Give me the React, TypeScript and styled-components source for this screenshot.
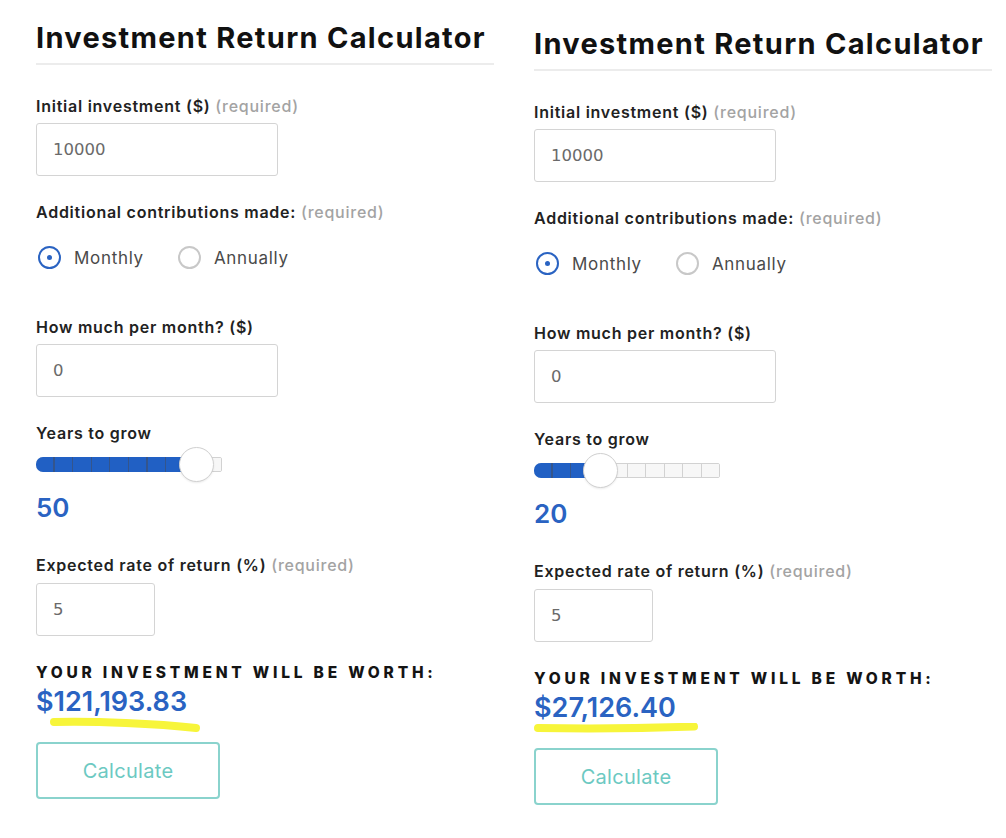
import React from "react";
import styled, { createGlobalStyle } from "styled-components";

const Global = createGlobalStyle`
  html, body { margin: 0; padding: 0; background: #ffffff; }
  body { font-family: Inter, "Open Sans", Lato, sans-serif; color: #1b1b1b; }
  * { box-sizing: border-box; }
`;

const Page = styled.main`
  display: flex;
  gap: 40px;
  padding-left: 36px;
  width: 1006px;
  height: 838px;
  overflow: hidden;
`;

const Panel = styled.section<{ $shift: number }>`
  width: 458px;
  padding-top: ${(p) => p.$shift}px;
  display: flex;
  flex-direction: column;
  align-items: flex-start;
`;

const Title = styled.h1`
  align-self: stretch;
  margin: 0;
  padding-top: 21px;
  padding-bottom: 8px;
  font-size: 29px;
  line-height: 34px;
  font-weight: 700;
  letter-spacing: 1.3px;
  color: #111;
  border-bottom: 2px solid #ececec;
  white-space: nowrap;
`;

const Label = styled.div<{ $top: number }>`
  margin-top: ${(p) => p.$top}px;
  font-size: 16px;
  line-height: 18px;
  font-weight: 600;
  letter-spacing: 0.75px;
  color: #222;
`;

const Req = styled.span`
  font-weight: 500;
  color: #a3a3a3;
`;

const Input = styled.div<{ $w: number; $top: number }>`
  margin-top: ${(p) => p.$top}px;
  width: ${(p) => p.$w}px;
  height: 53px;
  border: 1.5px solid #d4d4d4;
  border-radius: 3px;
  padding-left: 16px;
  display: flex;
  align-items: center;
  font-family: "DejaVu Sans", Inter, sans-serif;
  font-size: 16.5px;
  color: #6a6a6a;
`;

const RadioRow = styled.div`
  margin-top: 25px;
  padding-left: 2px;
  display: flex;
  align-items: center;
  gap: 34px;
`;

const RadioItem = styled.label`
  display: flex;
  align-items: center;
  gap: 13px;
  font-size: 17px;
  letter-spacing: 0.7px;
  color: #4a4a4a;
`;

const RadioCircle = styled.span<{ $on?: boolean }>`
  width: 23px;
  height: 23px;
  border-radius: 50%;
  border: 2px solid ${(p) => (p.$on ? "#2a63c2" : "#c8c8c8")};
  display: flex;
  align-items: center;
  justify-content: center;
  &::after {
    content: "";
    width: 5px;
    height: 5px;
    border-radius: 50%;
    background: ${(p) => (p.$on ? "#2a63c2" : "transparent")};
  }
`;

const SliderBox = styled.div`
  margin-top: 5px;
  position: relative;
  width: 186px;
  height: 34px;
  display: flex;
  align-items: center;
`;

const Track = styled.div`
  width: 186px;
  height: 15px;
  display: grid;
  grid-template-columns: repeat(10, 1fr);
  border-radius: 7px 2px 2px 7px;
  overflow: hidden;
  border: 1px solid #d2d2d2;
`;

const Cell = styled.span`
  background: #f7f7f7;
  border-left: 1px solid #d2d2d2;
  &:first-child { border-left: none; }
`;

const Fill = styled.div`
  position: absolute;
  left: 0;
  top: 10px;
  height: 15px;
  border-radius: 7px 0 0 7px;
  background: repeating-linear-gradient(
    90deg,
    #2160c4 0px,
    #2160c4 17.4px,
    #34558c 17.4px,
    #34558c 18.6px
  );
`;

const Thumb = styled.div`
  position: absolute;
  top: 0;
  width: 35px;
  height: 35px;
  margin-left: -17px;
  border-radius: 50%;
  background: #fff;
  border: 1.5px solid #d0d0d0;
  box-shadow: 0 1px 2px rgba(0, 0, 0, 0.08);
`;

const YearValue = styled.div`
  margin-top: 12px;
  font-size: 26px;
  line-height: 30px;
  font-weight: 600;
  color: #2a63c2;
`;

const Heading = styled.div`
  margin-top: 28px;
  font-size: 15.5px;
  line-height: 18px;
  font-weight: 800;
  letter-spacing: 3.8px;
  color: #141414;
  text-transform: uppercase;
  white-space: nowrap;
`;

const Result = styled.div`
  margin-top: 4px;
  font-size: 27px;
  line-height: 32px;
  font-weight: 600;
  color: #2a63c2;
`;

const Highlight = styled.svg`
  display: block;
  margin-top: -1px;
`;

const Button = styled.button`
  margin-top: 8px;
  width: 184px;
  height: 57px;
  border: 2px solid #8ad3cd;
  border-radius: 4px;
  background: #fff;
  font-family: inherit;
  font-size: 20px;
  letter-spacing: 0.3px;
  color: #6cc9c2;
`;

type CalcProps = {
  shift: number;
  years: number;
  thumb: number;
  result: string;
  hl: string;
};

function Calculator({ shift, years, thumb, result, hl }: CalcProps) {
  return (
    <Panel $shift={shift}>
      <Title>Investment Return Calculator</Title>
      <Label $top={32}>
        Initial investment ($) <Req>(required)</Req>
      </Label>
      <Input $w={242} $top={8}>10000</Input>
      <Label $top={27}>
        Additional contributions made: <Req>(required)</Req>
      </Label>
      <RadioRow>
        <RadioItem>
          <RadioCircle $on />
          Monthly
        </RadioItem>
        <RadioItem>
          <RadioCircle />
          Annually
        </RadioItem>
      </RadioRow>
      <Label $top={49}>How much per month? ($)</Label>
      <Input $w={242} $top={8}>0</Input>
      <Label $top={27}>Years to grow</Label>
      <SliderBox>
        <Track>
          {Array.from({ length: 10 }).map((_, i) => (
            <Cell key={i} />
          ))}
        </Track>
        <Fill style={{ width: thumb }} />
        <Thumb style={{ left: thumb }} />
      </SliderBox>
      <YearValue>{years}</YearValue>
      <Label $top={33}>
        Expected rate of return (%) <Req>(required)</Req>
      </Label>
      <Input $w={119} $top={9}>5</Input>
      <Heading>Your investment will be worth:</Heading>
      <Result>{result}</Result>
      <Highlight width="210" height="17" viewBox="0 0 210 17">
        <path d={hl} fill="none" stroke="#f7f53a" strokeWidth="8" strokeLinecap="round" />
      </Highlight>
      <Button>Calculate</Button>
    </Panel>
  );
}

export default function App() {
  return (
    <>
      <Global />
      <Page>
        <Calculator
          shift={0}
          years={50}
          thumb={160}
          result="$121,193.83"
          hl="M18 5 C 60 4, 120 6.5, 160 11"
        />
        <Calculator
          shift={6}
          years={20}
          thumb={66}
          result="$27,126.40"
          hl="M4 5 C 60 6, 120 5, 160 3.5"
        />
      </Page>
    </>
  );
}
